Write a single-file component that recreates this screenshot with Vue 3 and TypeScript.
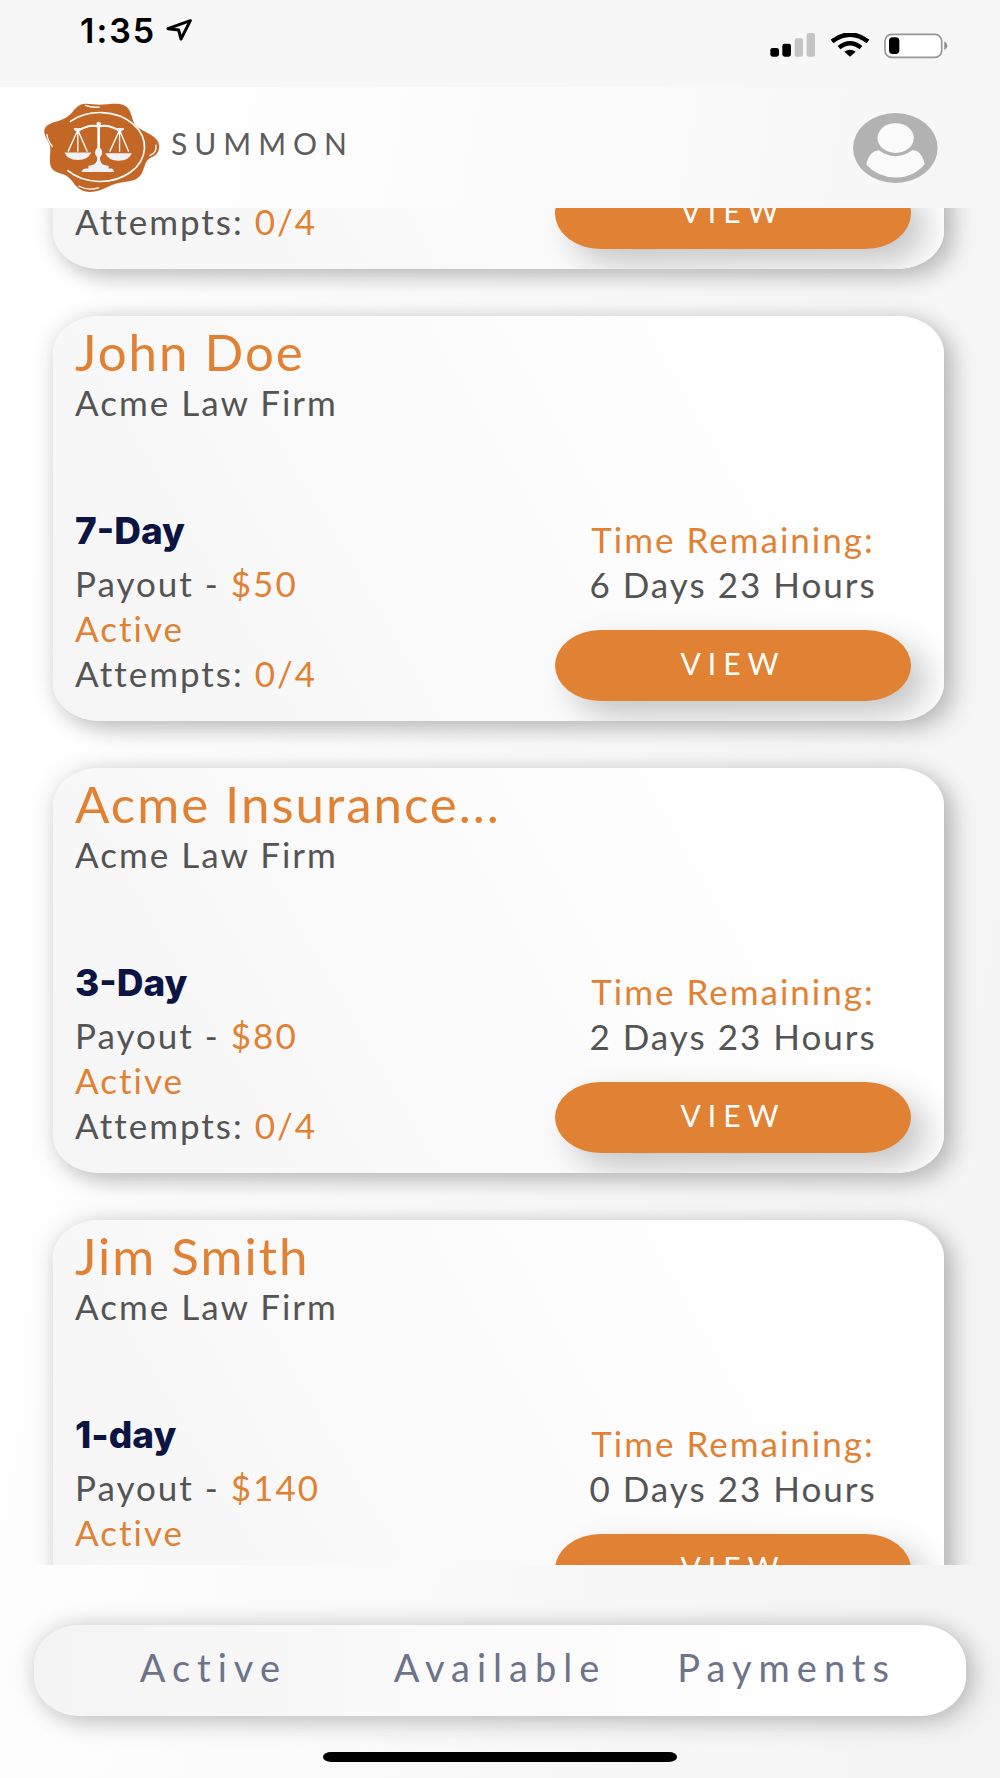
<script setup lang="ts">
import { onMounted, ref } from 'vue'

interface Job {
  name?: string
  firm?: string
  term?: string
  payout?: string
  status?: string
  remaining?: string
  attempts: string
}

const jobs: Job[] = [
  { attempts: '0/4' },
  { name: 'John Doe', firm: 'Acme Law Firm', term: '7-Day', payout: '$50', status: 'Active', remaining: '6 Days 23 Hours', attempts: '0/4' },
  { name: 'Acme Insurance...', firm: 'Acme Law Firm', term: '3-Day', payout: '$80', status: 'Active', remaining: '2 Days 23 Hours', attempts: '0/4' },
  { name: 'Jim Smith', firm: 'Acme Law Firm', term: '1-day', payout: '$140', status: 'Active', remaining: '0 Days 23 Hours', attempts: '0/4' },
]

const tabs = ['Active', 'Available', 'Payments']

const list = ref<HTMLElement | null>(null)

// Open the list scrolled to the current jobs, with the earlier one tucked under the header.
onMounted(() => {
  if (list.value) list.value.scrollTop = 344
})
</script>

<template>
  <div class="screen">
    <div class="status">
      <div class="clock">
        <span>1:35</span>
        <svg class="arrow" viewBox="0 0 78 66" aria-hidden="true">
          <path d="M73 5 L6 29 L38 33 L45 60 Z" fill="none" stroke="#000" stroke-width="9" stroke-linejoin="round" />
        </svg>
      </div>
      <div class="signals">
        <svg width="46" height="24" viewBox="0 0 138 72" aria-hidden="true">
          <rect x="1" y="45" width="26" height="26" rx="7" />
          <rect x="37" y="32" width="26" height="39" rx="7" />
          <rect x="74" y="16" width="25" height="55" rx="6" fill="#c4c4c4" />
          <rect x="110" y="0" width="25" height="71" rx="6" fill="#c4c4c4" />
        </svg>
        <svg width="40" height="24" viewBox="0 0 120 72" aria-hidden="true">
          <path d="M6 25 Q60 -15 114 25" fill="none" stroke="#000" stroke-width="14" />
          <path d="M27 44 Q60 18 93 44" fill="none" stroke="#000" stroke-width="13" />
          <path d="M43 56 Q60 44 77 56 L60 71 Z" />
        </svg>
        <svg width="64" height="26" viewBox="0 0 192 78" aria-hidden="true">
          <rect x="3" y="4" width="170" height="69" rx="20" fill="#fff" stroke="#979797" stroke-width="5" />
          <rect x="15" y="13" width="31" height="50" rx="11" />
          <path d="M181 25 Q200 38 181 51 Z" fill="#8d8d8d" />
        </svg>
      </div>
    </div>

    <header class="header">
      <a class="brand" href="#">
        <svg class="seal" viewBox="42 34 350 272" aria-hidden="true">
          <path fill="#c36727" d="M152 41 C166 35 190 41 210 41 C238 40 270 34 286 44 C307 55 305 83 317 101 C330 119 365 124 383 147 C397 168 387 192 368 199 C347 207 347 228 338 246 C326 273 294 271 271 276 C242 281 225 296 199 302 C174 308 154 303 140 288 C128 274 121 261 105 253 C83 244 63 245 60 216 C58 192 65 178 58 160 C51 143 39 130 44 114 C49 97 78 94 100 84 C127 74 130 51 152 41 Z" />
          <g fill="none" stroke="#fff" stroke-linecap="round">
            <path stroke-width="5" d="M122 91 A134 104 0 1 1 114 240" />
            <path stroke-width="4" d="M167 43 Q185 50 209 48 M51 131 Q52 148 67 167 M380 163 Q383 186 362 194 M148 287 Q174 301 207 292" />
            <path stroke-width="6" d="M135 115 Q151 118 164 110 Q184 101 207 107 Q230 101 250 110 Q263 118 280 115" />
            <path stroke-width="8" d="M207 100 V226" />
            <path stroke-width="4" d="M144 117 L115 181 M144 117 V181 M144 117 L172 181 M270 117 L241 181 M270 117 V181 M270 117 L297 181" />
          </g>
          <g fill="#f1f1f6">
            <circle cx="207" cy="99" r="7" />
            <path d="M131 111 H158 L151 121 H138 Z M256 111 H283 L276 121 H264 Z" />
            <path d="M104 185 H184 Q176 207 144 208 Q112 207 104 185 Z M227 187 H307 Q299 209 267 210 Q235 209 227 187 Z" />
            <path d="M207 166 C222 180 219 191 210 201 C214 223 221 223 237 225 V233 H247 Q253 236 253 244 H155 Q156 236 167 233 H176 V225 C193 223 200 221 204 201 C193 190 193 178 207 166 Z" />
          </g>
        </svg>
        <span class="wordmark">SUMMON</span>
      </a>
      <button class="account" type="button" aria-label="Account">
        <svg viewBox="0 0 257 212" aria-hidden="true">
          <ellipse cx="128" cy="106" rx="128" ry="106" fill="#b2b2b2" />
          <ellipse cx="129" cy="76" rx="55" ry="45" fill="#fafafa" />
          <path fill="#fafafa" d="M78 113 Q129 149 179 113 Q207 112 217 155 Q181 196 128 195 Q75 195 40 157 Q48 116 78 113 Z" />
        </svg>
      </button>
    </header>

    <main ref="list" class="list">
      <article v-for="(job, i) in jobs" :key="i" class="card">
        <div>
          <h2 v-if="job.name" class="name">{{ job.name }}</h2>
          <p v-if="job.firm" class="line">{{ job.firm }}</p>
        </div>
        <div class="details">
          <div class="facts">
            <h3 v-if="job.term" class="term">{{ job.term }}</h3>
            <p v-if="job.payout" class="line">Payout - <span class="accent">{{ job.payout }}</span></p>
            <p v-if="job.status" class="line accent">{{ job.status }}</p>
            <p class="line">Attempts: <span class="accent">{{ job.attempts }}</span></p>
          </div>
          <div class="action">
            <template v-if="job.remaining">
              <p class="line accent">Time Remaining:</p>
              <p class="line">{{ job.remaining }}</p>
            </template>
            <button class="view" type="button">VIEW</button>
          </div>
        </div>
      </article>
    </main>

    <footer class="footer">
      <nav class="tabs">
        <a v-for="tab in tabs" :key="tab" href="#">{{ tab }}</a>
      </nav>
      <div class="home"></div>
    </footer>
  </div>
</template>

<style>
body {
  margin: 0;
}
</style>

<style scoped>
.screen {
  display: flex;
  flex-direction: column;
  height: 100vh;
  font-family: Lato, 'Open Sans', sans-serif;
  color: #545454;
  background: linear-gradient(100deg, #fff 10%, #f3f3f3 100%);
}

.status {
  flex: none;
  display: flex;
  justify-content: space-between;
  box-sizing: border-box;
  height: 87px;
  padding: 10px 52px 0 80px;
  background: #f7f7f7;
}

.clock {
  display: flex;
  gap: 10px;
  font: 600 34px/42px Inter, sans-serif;
  letter-spacing: 2px;
  color: #000;
}

.arrow {
  width: 26px;
  height: 22px;
  margin-top: 9px;
}

.signals {
  display: flex;
  gap: 14px;
  padding-top: 23px;
}

.header {
  flex: none;
  display: flex;
  justify-content: space-between;
  align-items: center;
  height: 121px;
  padding: 0 62px 0 44px;
}

.brand {
  display: flex;
  align-items: center;
  gap: 11px;
  color: #5c5c5c;
  text-decoration: none;
}

.seal {
  width: 116px;
  height: 91px;
}

.wordmark {
  font-size: 30px;
  line-height: 36px;
  letter-spacing: 7px;
  padding-bottom: 10px;
}

.account {
  width: 85px;
  height: 70px;
  padding: 0;
  border: 0;
  background: none;
}

.account svg {
  display: block;
  width: 100%;
  height: 100%;
}

.list {
  flex: 1;
  min-height: 0;
  display: flex;
  flex-direction: column;
  gap: 47px;
  overflow-y: auto;
  scrollbar-width: none;
  padding: 0 56px 0 53px;
}

.card {
  flex: none;
  display: flex;
  flex-direction: column;
  justify-content: space-between;
  box-sizing: border-box;
  min-height: 405px;
  padding: 8px 33px 20px 22px;
  overflow: hidden;
  border-radius: 46px / 38px;
  background: linear-gradient(60deg, #f5f5f5, #fff 85%);
  box-shadow: 12px 10px 22px rgba(0, 0, 0, 0.14), 2px 2px 24px rgba(0, 0, 0, 0.18);
}

.name,
.term,
.line {
  margin: 0;
}

.name {
  font-size: 51px;
  font-weight: 400;
  line-height: 56px;
  letter-spacing: 2px;
  color: #e18133;
}

.line {
  font-size: 35px;
  line-height: 45px;
  letter-spacing: 2px;
}

.accent {
  color: #e18133;
}

.details {
  display: flex;
  justify-content: space-between;
  align-items: flex-end;
}

.facts {
  padding-bottom: 5px;
}

.term {
  margin-bottom: 8px;
  font: 800 37px/44px Inter, sans-serif;
  color: #0b1442;
}

.action {
  width: 356px;
  text-align: center;
}

.view {
  display: block;
  width: 100%;
  height: 71px;
  margin-top: 23px;
  padding: 0 0 6px;
  border: 0;
  border-radius: 46px / 36px;
  background: #e18133;
  color: #fff;
  font-family: inherit;
  font-size: 30px;
  letter-spacing: 7px;
  box-shadow: 16px 14px 32px rgba(0, 0, 0, 0.22);
}

.footer {
  flex: none;
  padding: 60px 34px 16px;
}

.tabs {
  display: grid;
  grid-template-columns: repeat(3, 1fr);
  align-items: center;
  height: 91px;
  padding: 0 36px 8px;
  box-sizing: border-box;
  border-radius: 46px / 40px;
  background: linear-gradient(90deg, #f4f4f4, #fff 85%);
  box-shadow: 10px 8px 24px rgba(0, 0, 0, 0.14), 0 0 24px rgba(0, 0, 0, 0.16);
}

.tabs a {
  color: #6d738b;
  font-size: 38px;
  line-height: 44px;
  letter-spacing: 7px;
  text-align: center;
  text-decoration: none;
}

.home {
  width: 38%;
  height: 10px;
  margin: 36px auto 0;
  border-radius: 8px / 5px;
  background: #000;
}
</style>
